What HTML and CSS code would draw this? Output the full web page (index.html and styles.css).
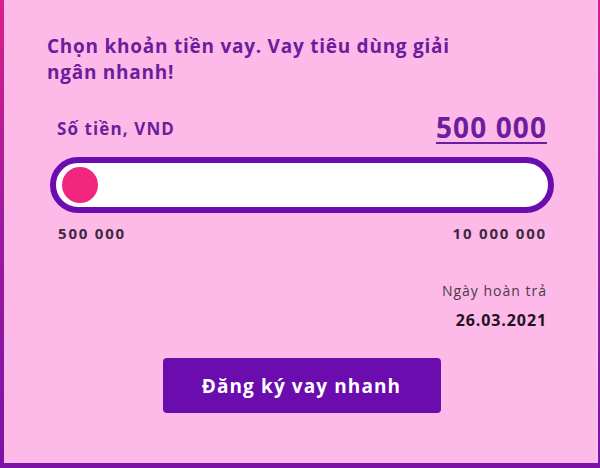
FILE: index.html
```html
<!DOCTYPE html>
<html lang="vi">
<head>
<meta charset="utf-8">
<link rel="stylesheet" href="styles.css">
</head>
<body>
<div class="frame">
  <div class="panel">
    <h1 class="title">Chọn khoản tiền vay. Vay tiêu dùng giải ngân nhanh!</h1>
    <div class="amount-row">
      <span class="amount-label">Số tiền, VND</span>
      <span class="amount-value">500 000</span>
    </div>
    <div class="slider">
      <div class="thumb"></div>
    </div>
    <div class="range-row">
      <span>500 000</span>
      <span>10 000 000</span>
    </div>
    <div class="due">
      <div class="due-label">Ngày hoàn trả</div>
      <div class="due-date">26.03.2021</div>
    </div>
    <div class="actions">
      <button class="cta">Đăng ký vay nhanh</button>
    </div>
  </div>
</div>
</body>
</html>
```
FILE: styles.css
```css
* { box-sizing: border-box; }
html, body { margin: 0; padding: 0; }
body {
  width: 600px;
  height: 468px;
  overflow: hidden;
  font-family: "Open Sans", "Liberation Sans", sans-serif;
}
.frame {
  height: 468px;
  padding: 0 2px 5px 4px;
  background: linear-gradient(180deg, #dc1f8a 0%, #a01a9e 45%, #7c12a8 100%);
}
.panel {
  height: 463px;
  background: #fdb9e7;
  border-right: 2px solid #f6c6f0;
  padding: 33px 42px 0 43px;
}
.title {
  margin: 0;
  width: 440px;
  font-size: 19px;
  line-height: 26px;
  font-weight: 700;
  letter-spacing: 0.75px;
  color: #6b1d9e;
}
.amount-row {
  display: flex;
  justify-content: space-between;
  align-items: flex-end;
  margin-top: 25px;
  padding: 0 7px 0 10px;
}
.amount-label {
  font-size: 17px;
  font-weight: 700;
  letter-spacing: 1.1px;
  color: #6b1d9e;
  padding-bottom: 4px;
}
.amount-value {
  font-size: 28px;
  font-weight: 700;
  letter-spacing: 1.1px;
  color: #6b1d9e;
  text-decoration: underline;
  text-underline-offset: 4px;
  text-decoration-thickness: 2px;
  line-height: 34px;
}
.slider {
  margin: 13px 0 0 3px;
  width: 504px;
  height: 56px;
  border: 6px solid #6a0caf;
  border-radius: 28px;
  background: #ffffff;
  display: flex;
  align-items: center;
  padding-left: 6px;
}
.thumb {
  width: 36px;
  height: 36px;
  border-radius: 50%;
  background: #f0267f;
}
.range-row {
  display: flex;
  justify-content: space-between;
  margin-top: 10px;
  padding: 0 7px 0 11px;
  font-size: 15px;
  font-weight: 700;
  letter-spacing: 1.8px;
  color: #3e2a40;
}
.due {
  margin-top: 38px;
  padding-right: 7px;
  text-align: right;
}
.due-label {
  font-size: 14px;
  letter-spacing: 1px;
  color: #4b3a4c;
}
.due-date {
  margin-top: 9px;
  font-size: 16px;
  font-weight: 700;
  letter-spacing: 0.9px;
  color: #1e1220;
}
.actions {
  display: flex;
  justify-content: center;
  margin-top: 27px;
  padding-left: 2px;
}
.cta {
  width: 278px;
  height: 55px;
  border: 0;
  border-radius: 4px;
  background: #6a0cae;
  color: #ffffff;
  font-family: inherit;
  font-size: 19px;
  font-weight: 700;
  letter-spacing: 1.1px;
}
```
